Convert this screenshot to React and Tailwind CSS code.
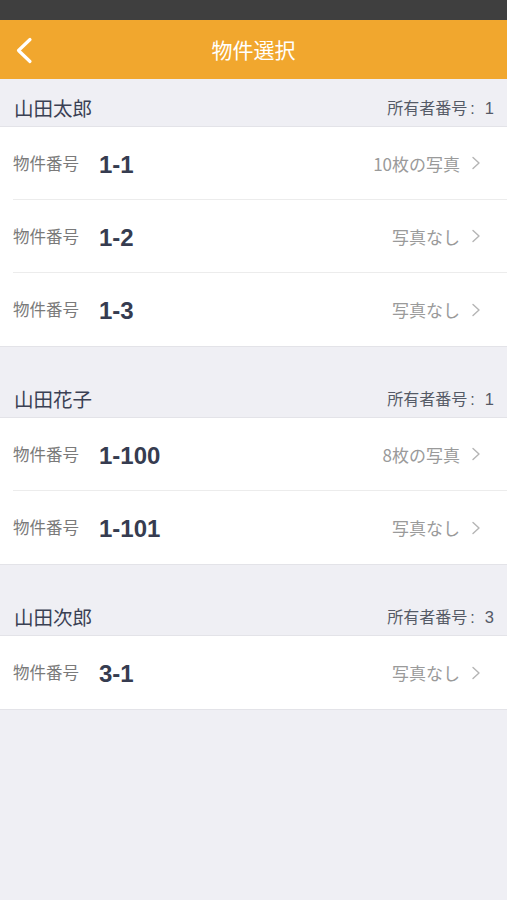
import React from "react";

const groups = [
  {
    name: "山田太郎",
    owner: "1",
    rows: [
      { no: "1-1", photo: "10枚の写真" },
      { no: "1-2", photo: "写真なし" },
      { no: "1-3", photo: "写真なし" },
    ],
  },
  {
    name: "山田花子",
    owner: "1",
    rows: [
      { no: "1-100", photo: "8枚の写真" },
      { no: "1-101", photo: "写真なし" },
    ],
  },
  {
    name: "山田次郎",
    owner: "3",
    rows: [{ no: "3-1", photo: "写真なし" }],
  },
];

const jp = { fontFamily: '"Noto Sans CJK JP", "Noto Sans", sans-serif' };
const num = { fontFamily: '"Liberation Sans", Arial, sans-serif' };

function Chevron() {
  return (
    <svg width="10" height="14" viewBox="0 0 10 14" className="ml-[11px]">
      <path d="M2 1.5 L8 7 L2 12.5" fill="none" stroke="#b5b5b5" strokeWidth="1.4" strokeLinecap="round" strokeLinejoin="round" />
    </svg>
  );
}

export default function App() {
  return (
    <div className="w-[507px] h-[900px] bg-[#efeff4] flex flex-col" style={jp}>
      <div className="h-[20px] bg-[#3f3f3f]" />
      <div className="h-[59px] bg-[#f1a72e] flex items-center relative">
        <svg width="20" height="28" viewBox="0 0 20 28" className="absolute left-[14px] top-[17px]">
          <path d="M16 2.5 L4.5 13.5 L16 24.5" fill="none" stroke="#ffffff" strokeWidth="3.2" strokeLinecap="round" strokeLinejoin="round" />
        </svg>
        <div className="flex-1 text-center text-white text-[21px] leading-none">物件選択</div>
      </div>

      {groups.map((g, gi) => (
        <div key={g.name} className={gi === 0 ? "" : "mt-[23px]"}>
          <div className="h-[48px] flex items-center justify-between pl-[14px] pr-[13px] border-b border-[#e3e3e8]">
            <span className="text-[19.5px] text-[#3a4053] leading-none pt-[11px]">{g.name}</span>
            <span className="text-[16px] text-[#555a66] leading-none pt-[11px] flex items-baseline">
              所有者番号<span className="ml-[3px]" style={num}>:</span>
              <span className="ml-[10px] text-[16.5px]" style={num}>{g.owner}</span>
            </span>
          </div>
          <div className="bg-white border-b border-[#e3e3e8]">
            {g.rows.map((r, ri) => (
              <div key={r.no} className="pl-[13px]">
                <div className={"h-[73px] flex items-center pr-[26px] " + (ri < g.rows.length - 1 ? "border-b border-[#ececec]" : "")}>
                  <span className="text-[16.5px] text-[#7a7a7a] w-[86px] leading-none">物件番号</span>
                  <span className="text-[24px] font-bold text-[#363c50] leading-none pt-[3px]" style={num}>{r.no}</span>
                  <span className="ml-auto text-[17px] text-[#9a9a9a] leading-none">{r.photo}</span>
                  <Chevron />
                </div>
              </div>
            ))}
          </div>
        </div>
      ))}
    </div>
  );
}
